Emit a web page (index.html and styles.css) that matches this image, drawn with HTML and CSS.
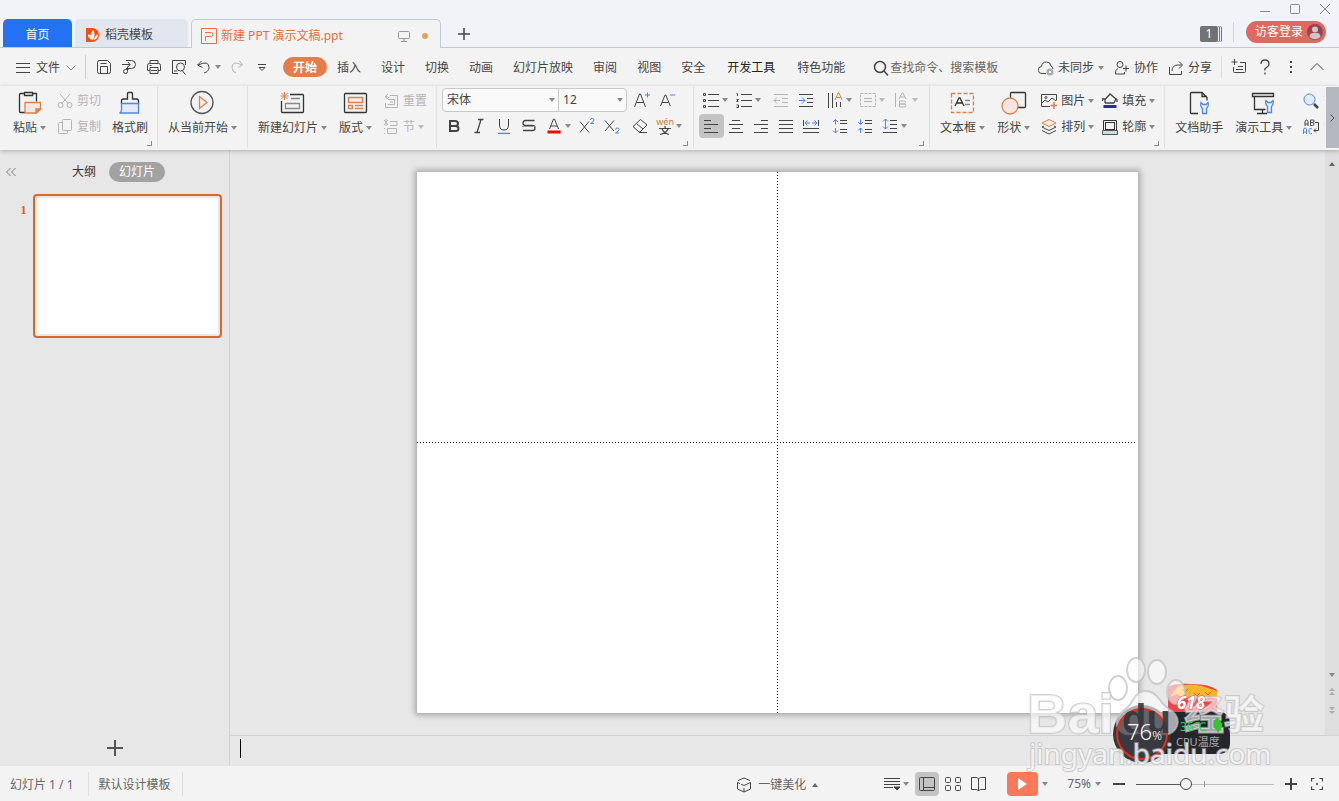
FILE: index.html
```html
<!DOCTYPE html>
<html lang="zh-CN">
<head>
    <meta charset="utf-8">
    <meta name="viewport" content="width=device-width, initial-scale=1">
    <title>新建 PPT 演示文稿.ppt</title>
    <link rel="stylesheet" href="styles.css">
</head>
<body>
    <!-- Window title and document tabs -->
    <header class="titlebar">
        <nav class="doc-tabs">
            <button class="doc-tab home">首页</button>
            <button class="doc-tab store">
                <svg width="14" height="16" viewBox="0 0 14 16"><path d="M0 1h6a7 7 0 0 1 0 14H0z" fill="#ff4a12"/><path d="M7 13C3 11 4 7 7 3c2 3 2 6 0 10zM6 13C3 12 2 10 2 7c2 1 4 3 4 6zM8 13c3-1 4-3 4-6-2 1-4 3-4 6z" fill="#fff"/></svg>
                <span>稻壳模板</span>
            </button>
            <button class="doc-tab active">
                <svg width="16" height="16" viewBox="0 0 16 16" fill="none" stroke="#e8703a"><path d="M.5.5h15v15H.5z"/><path d="M4 4.500h6.500q1.500 0 1.500 2t-1.500 2H4.500V13"/></svg>
                <span class="doc-name">新建 PPT 演示文稿.ppt</span>
                <svg width="12" height="12" viewBox="0 0 12 12" fill="none" stroke="#999"><rect x=".5" y="1.500" width="11" height="7" rx="1"/><path d="M6 8.500v3M3 11.500h6"/></svg>
                <i class="unsaved"></i>
            </button>
            <button class="new-tab" aria-label="新建">
                <svg width="14" height="14" viewBox="0 0 14 14" stroke="#444" stroke-width="1.500"><path d="M7 1v12M1 7h12"/></svg>
            </button>
        </nav>
        <div class="window-side">
            <div class="window-buttons">
                <button aria-label="最小化"><svg width="12" height="12" viewBox="0 0 12 12" stroke="#888"><path d="M1 8.500h10"/></svg></button>
                <button aria-label="最大化"><svg width="12" height="12" viewBox="0 0 12 12" fill="none" stroke="#888"><rect x="1.500" y="1.500" width="9" height="9" rx="1"/></svg></button>
                <button aria-label="关闭"><svg width="12" height="12" viewBox="0 0 12 12" stroke="#888"><path d="M1 1l10 10M11 1L1 11"/></svg></button>
            </div>
            <div class="account">
                <span class="count">1</span>
                <i class="account-line"></i>
                <button class="login">访客登录
                    <svg width="16" height="16" viewBox="0 0 16 16"><circle cx="8" cy="8" r="8" fill="#914850"/><circle cx="8" cy="5.500" r="3" fill="#d7c0c7"/><path d="M2.500 13q0-3.500 3-4h5q3 .5 3 4-5.500 4.500-11 0z" fill="#d7c0c7"/></svg>
                </button>
            </div>
        </div>
    </header>

    <!-- Menu -->
    <nav class="menubar">
        <button class="file-menu">
            <svg width="14" height="12" viewBox="0 0 14 12" stroke="#444"><path d="M0 1.500h14M0 5.500h14M0 10.500h14"/></svg>
            文件
            <svg width="10" height="6" viewBox="0 0 10 6" fill="none" stroke="#888"><path d="M.5.5L5 5 9.500.5"/></svg>
        </button>
        <div class="quick">
            <button class="tool" aria-label="保存"><svg class="ic" viewBox="0 0 16 16"><path d="M2.500 1.500h9l3 3v8q0 2-2 2h-9q-2 0-2-2v-9q0-2 2-2zM4.500 14V7.500h7V14M4.500 4.500h6"/></svg></button>
            <button class="tool" aria-label="输出为PDF"><svg class="ic" viewBox="0 0 16 16"><path d="M5 1.500h5.500a4 4 0 0 1 0 8H5M1 5.500h8M7 3l2 2.500L7 8M6.500 7.500v5a2 2 0 1 1-2-2h3"/></svg></button>
            <button class="tool" aria-label="打印"><svg class="ic" viewBox="0 0 16 16"><path d="M4 4.500v-3h8v3M4 11.500H1.500v-5q0-2 2-2h9q2 0 2 2v5H12M4 8.500h8v6H4zM5 11.500h6M3.500 6.500h2"/></svg></button>
            <button class="tool" aria-label="打印预览"><svg class="ic" viewBox="0 0 16 16"><path d="M7 14.500H1.500v-13h13V6M3 12h3"/><circle cx="9.500" cy="8" r="4"/><path d="M11.500 12l3 3.500"/></svg></button>
            <button class="tool" aria-label="撤销"><svg class="ic" viewBox="0 0 16 16"><path d="M5.500 2l-4 4 5 2.500M2 6q11-5 11 2.500 0 4-5 5.500"/></svg><i class="caret"></i></button>
            <button class="tool faded" aria-label="恢复"><svg class="ic" viewBox="0 0 16 16"><path d="M10.500 2l3 4-4 2.500M13 6Q3 1 3 8.500 3 13 7 14"/></svg></button>
            <button class="tool" aria-label="更多"><svg class="ic" viewBox="0 0 16 16"><path d="M4 5.500h8M5 8.500l3 3 3-3z"/></svg></button>
        </div>
        <div class="menu-tabs">
            <button class="current">开始</button>
            <button>插入</button>
            <button>设计</button>
            <button>切换</button>
            <button>动画</button>
            <button>幻灯片放映</button>
            <button>审阅</button>
            <button>视图</button>
            <button>安全</button>
            <button class="dev">开发工具</button>
            <button>特色功能</button>
        </div>
        <label class="search">
            <svg class="ic" viewBox="0 0 16 16" stroke-width="1.500"><circle cx="7" cy="7" r="5.500"/><path d="M11 11l4 4.500"/></svg>
            <input type="text" aria-label="查找" placeholder="查找命令、搜索模板">
        </label>
        <div class="share">
            <button><svg class="ic" viewBox="0 0 16 16"><path d="M8 13.500H4a3.500 3.500 0 0 1-.5-7Q4 2 8.500 2q4 0 4.500 4 2 1 2 3"/><circle cx="12" cy="12" r="3.500" fill="#a3a9b8" stroke="none"/><path d="M10.800 10.800l2.400 2.400M13.200 10.800l-2.400 2.400" stroke="#fff"/></svg>未同步<i class="caret"></i></button>
            <button><svg class="ic" viewBox="0 0 16 16"><circle cx="6" cy="4.500" r="3"/><path d="M4 8.500q-3 1-2.500 5.500h9v-2M9 8.500h6M12 5.500v6"/></svg>协作</button>
            <button><svg class="ic" viewBox="0 0 16 16"><path d="M1.500 7v7.500h12V11M4 11q0-6 6-6h4M11 1.500L14.500 5 11 8.500"/></svg>分享</button>
        </div>
        <div class="menu-end">
            <button aria-label="批注"><svg class="ic" viewBox="0 0 16 16"><path d="M3.500 0v6M.5 3h6M9 3.500h5.500v9q0 1-1 1H3.500q-1 0-1-1V8M7 7.500h5M5 10.500h7"/></svg></button>
            <button aria-label="帮助"><svg class="ic" viewBox="0 0 16 16"><path d="M4 5q0-4 4-4t4 4q0 2-2.500 3.500T8 11.500M8 13.500v2" stroke-width="1.300"/></svg></button>
            <button aria-label="更多"><svg class="ic" viewBox="0 0 16 16"><path d="M8 2v2M8 7v2M8 12v2" stroke-width="2"/></svg></button>
            <button aria-label="收起"><svg class="ic" viewBox="0 0 16 16"><path d="M1.500 11L8 4.500l6.500 6.500"/></svg></button>
        </div>
    </nav>

    <!-- Ribbon -->
    <section class="ribbon">
        <div class="groups">
            <div class="group first">
                <button class="big">
                    <svg width="28" height="28" viewBox="1 0 28 28" fill="none" stroke="#333" stroke-width="1.300"><path d="M9 4.500H5.500q-1 0-1 1v17q0 1 1 1H10M18 4.500h3.500v8M9.500 3.500h8v3h-8z"/><path d="M10 13.500h15.500v7l-4 3.500H10z" fill="#f5e8e2" stroke="#d9824f"/><path d="M25 20l-4 4v-4z" fill="#d9824f" stroke="#d9824f"/></svg>
                    <span>粘贴<i class="caret"></i></span>
                </button>
                <div class="stack">
                    <button class="small faded"><svg class="ic" viewBox="0 0 16 16"><path d="M3 1l8.500 10M13 1L4.500 11"/><circle cx="3.500" cy="12" r="2.500"/><circle cx="12.500" cy="12" r="2.500"/></svg>剪切</button>
                    <button class="small faded"><svg class="ic" viewBox="0 0 16 16"><rect x="5.500" y=".5" width="9" height="11" rx="1"/><path d="M5.500 3.500h-3q-1 0-1 1v9q0 1 1 1h7q1 0 1-1v-2"/></svg>复制</button>
                </div>
                <button class="big">
                    <svg width="28" height="28" viewBox="0 0 28 28" fill="none" stroke="#333" stroke-width="1.300"><path d="M5.500 15v-3q0-2 2-2h4V4.500q0-1 1-1h3q1 0 1 1V10h4q2 0 2 2v3"/><path d="M5.500 14.500h17v9.500h-19q2-1 2-3z" fill="#e2eaf6" stroke="#4f87dd"/></svg>
                    <span>格式刷</span>
                </button>
                <i class="launcher"></i>
            </div>

            <div class="group">
                <button class="big">
                    <svg width="28" height="28" viewBox="1 0 28 28" fill="none" stroke="#555" stroke-width="1.300"><circle cx="14" cy="13.500" r="11"/><path d="M11.500 7.500v12l7.500-6z" stroke="#d9824f" fill="#f8ece5"/></svg>
                    <span>从当前开始<i class="caret"></i></span>
                </button>
            </div>

            <div class="group">
                <button class="big">
                    <svg width="28" height="28" viewBox="1 0 28 28" fill="none" stroke="#333" stroke-width="1.300"><path d="M12 5.500h12.500q1 0 1 1v16q0 1-1 1h-20q-1 0-1-1V12"/><path d="M7.500 14.500h14v5h-14zM13 9.500h9" stroke="#888"/><path d="M6.500 3v8M2.500 7h8M3.500 4l6 6M9.500 4l-6 6" stroke="#d9824f" stroke-width="1"/></svg>
                    <span>新建幻灯片<i class="caret"></i></span>
                </button>
                <button class="big">
                    <svg width="28" height="28" viewBox="1 0 28 28" fill="none" stroke="#333" stroke-width="1.300"><rect x="3.500" y="4.500" width="22" height="19" rx="1"/><path d="M7.500 8.500h14v5h-14zM7.500 16.500h4v3h-4zM14 16.500h8M14 19.500h8" stroke="#d9824f" fill="#f8ece5"/></svg>
                    <span>版式<i class="caret"></i></span>
                </button>
                <div class="stack">
                    <button class="small faded"><svg class="ic" viewBox="0 0 16 16"><path d="M7 2.500h7.500v12h-12V10M5 6.500h6.500v5H5M5 1L2 3.500 5 6M2 3.500Q5 3 6 5M7 9h3"/></svg>重置</button>
                    <button class="small faded"><svg class="ic" viewBox="0 0 16 16"><path d="M7 2.500h7v4H7M4.500 9.500h9v5h-9zM1 9.500h1M1 14.500h1M1 1l4 5M5 1L1 6M3 0v7"/></svg>节<i class="caret"></i></button>
                </div>
            </div>

            <div class="group column">
                <div class="row">
                    <div class="combo">
                        <label class="pick font"><select aria-label="字体"><option>宋体</option></select><i class="caret"></i></label>
                        <label class="pick size"><select aria-label="字号"><option>12</option></select><i class="caret"></i></label>
                    </div>
                    <div class="set">
                        <button class="tool" aria-label="增大字号"><svg class="ic" viewBox="0 0 16 16"><path d="M.5 15L5.500 2h1l5 13M2.500 10.500h7.500"/><path d="M11 3h5M13.500.5v5" class="blue"/></svg></button>
                        <button class="tool" aria-label="减小字号"><svg class="ic" viewBox="0 0 16 16"><path d="M1.500 14L6 3h.8l4.500 11M3 10.500h6.500"/><path d="M11 3h5" class="blue"/></svg></button>
                    </div>
                </div>
                <div class="row">
                    <div class="set">
                        <button class="tool" aria-label="加粗"><svg class="ic" viewBox="0 0 16 16"><path d="M4 3h5q3 0 3 2.500T9 8H4zM4 8h5.500q3 0 3 2.500t-3 2.500H4z" stroke-width="2"/></svg></button>
                        <button class="tool" aria-label="倾斜"><svg class="ic" viewBox="0 0 16 16"><path d="M7 1.500h5.500M3.500 14.500H9M10 1.500l-4 13" stroke-width="1.300"/></svg></button>
                        <button class="tool" aria-label="下划线"><svg class="ic" viewBox="0 0 16 16"><path d="M3.500 1v6q0 5 4.500 5t4.500-5V1"/><path d="M2 15.500h12" class="blue" stroke-width="1.500"/></svg></button>
                        <button class="tool" aria-label="删除线"><svg class="ic" viewBox="0 0 16 16"><path d="M13.500 2.500h-9q-2.500 0-2.500 2.500t2.500 2.500h7Q14 7.500 14 10t-2.500 2.500H2" stroke-width="1.300"/><path d="M1 8.500h14" stroke="#999"/></svg></button>
                        <button class="tool" aria-label="字体颜色"><svg class="ic" viewBox="0 0 16 16"><path d="M3.500 11L7.500 1h1l4 10M5 8h6"/><path d="M1.500 14h13" stroke="#f00" stroke-width="3"/></svg><i class="caret"></i></button>
                        <button class="tool" aria-label="上标"><svg class="ic" viewBox="0 0 16 16"><path d="M1 3.500l9 11M10 3.500l-9 11"/><path d="M11.500 2q0-1.500 1.700-1.500T15 2t-3.500 3.500H15" class="blue"/></svg></button>
                        <button class="tool" aria-label="下标"><svg class="ic" viewBox="0 0 16 16"><path d="M1 2.500l9 10.500M10 2.500L1 13"/><path d="M11.500 11.500q0-1.500 1.700-1.500t1.800 1.500-3.500 3.500H15" class="blue"/></svg></button>
                    </div>
                    <div class="set">
                        <button class="tool" aria-label="清除格式"><svg class="ic" viewBox="0 0 16 16"><path d="M7 14L1 8.500l7.500-7L15 7l-7 7zM4.500 5.500L11 11M7 14.500h8"/></svg></button>
                        <button class="tool" aria-label="拼音"><span class="pinyin"><b>wén</b><svg width="12" height="9" viewBox="0 0 12 9" fill="none" stroke="#444" stroke-width="1.200"><path d="M6 0v2M0 2.500h12M3 3q2 4 7 5.500M9 3Q7 7 1 8.500"/></svg></span><i class="caret"></i></button>
                    </div>
                </div>
                <i class="launcher"></i>
            </div>

            <div class="group column para">
                <div class="row">
                    <div class="set">
                        <button class="tool" aria-label="项目符号"><svg class="ic" viewBox="0 0 16 16"><path d="M5 2.500h11M5 8.500h11M5 14.500h11"/><path d="M.5 1.500h2v2h-2zM.5 7.500h2v2h-2zM.5 13.500h2v2h-2z"/></svg><i class="caret"></i></button>
                        <button class="tool" aria-label="编号"><svg class="ic" viewBox="0 0 16 16"><path d="M5 2.500h11M5 8.500h11M5 14.500h11M.5 1.500h1v2.500M.5 7.500h2l-2 2h2M.5 13h2v2.500h-2"/></svg><i class="caret"></i></button>
                    </div>
                    <div class="set">
                        <button class="tool faded" aria-label="减少缩进"><svg class="ic" viewBox="0 0 16 16"><path d="M1 2.500h14M9 6.500h6M9 10.500h6M1 14.500h14M1 8.500h6M4 5.500l-3 3 3 3"/></svg></button>
                        <button class="tool" aria-label="增加缩进"><svg class="ic" viewBox="0 0 16 16"><path d="M1 2.500h14M9 6.500h6M9 10.500h6M1 14.500h14"/><path d="M1 8.500h6M4 5.500l3 3-3 3" class="blue"/></svg></button>
                    </div>
                    <div class="set">
                        <button class="tool" aria-label="文字方向"><svg class="ic" viewBox="0 0 16 16"><path d="M1.500 1v15M5.500 1v15M9.500 10v5M13.500 10v5"/><path d="M8 8l3-7h1l3 7M9 5.500h5" stroke="#d9824f"/></svg><i class="caret"></i></button>
                        <button class="tool faded" aria-label="对齐文本"><svg class="ic" viewBox="0 0 16 16"><path d="M.5 1.500h15v13H.5z" stroke-dasharray="3 1"/><path d="M4 6.500h8M4 9.500h8"/></svg><i class="caret"></i></button>
                        <button class="tool faded" aria-label="分散文字"><svg class="ic" viewBox="0 0 16 16"><path d="M2.500 1v14M6 7l3-6h1l3 6M7 5h5M6.500 9v6H11q2 0 2-1.500T11 12H7h3.500q2 0 2-1.500T10.500 9z"/></svg><i class="caret"></i></button>
                    </div>
                </div>
                <div class="row">
                    <div class="set">
                        <button class="tool pressed" aria-label="左对齐"><svg class="ic" viewBox="0 0 16 16"><path d="M1 2.500h7M1 6.500h14M1 10.500h7M1 14.500h14"/></svg></button>
                        <button class="tool" aria-label="居中"><svg class="ic" viewBox="0 0 16 16"><path d="M4 2.500h8M1 6.500h14M4 10.500h8M1 14.500h14"/></svg></button>
                        <button class="tool" aria-label="右对齐"><svg class="ic" viewBox="0 0 16 16"><path d="M8 2.500h7M1 6.500h14M8 10.500h7M1 14.500h14"/></svg></button>
                        <button class="tool" aria-label="两端对齐"><svg class="ic" viewBox="0 0 16 16"><path d="M1 2.500h14M1 6.500h14M1 10.500h14M1 14.500h14"/></svg></button>
                        <button class="tool" aria-label="分散对齐"><svg class="ic" viewBox="0 0 16 16"><path d="M.5 2v6M15.500 2v6M0 10.500h16M0 14.500h16"/><path d="M2 5h5M4.500 2.500L2 5l2.500 2.500M9 5h5M11.500 2.500L14 5l-2.500 2.500" class="blue"/></svg></button>
                    </div>
                    <div class="set">
                        <button class="tool" aria-label="增大段落间距"><svg class="ic" viewBox="0 0 16 16"><path d="M8 2.500h7M8 5.500h7M8 11.500h7M8 14.500h7"/><path d="M3.500 1.500v5M1 4l2.500-2.500L6 4M3.500 10v5M1 12.500L3.500 15 6 12.500" class="blue"/></svg></button>
                        <button class="tool" aria-label="减小段落间距"><svg class="ic" viewBox="0 0 16 16"><path d="M8 2.500h7M8 5.500h7M8 11.500h7M8 14.500h7"/><path d="M3.500 1.500v5M1 4l2.500 2.500L6 4M3.500 10v5M1 12.500L3.500 10 6 12.500" class="blue"/></svg></button>
                        <button class="tool" aria-label="行距"><svg class="ic" viewBox="0 0 16 16"><path d="M8 2.500h7M8 6.500h7M8 10.500h7M1 14.500h14"/><path d="M3.500 1v10M1 3.500L3.500 1 6 3.500M1 8.500L3.500 11 6 8.500" class="blue"/></svg><i class="caret"></i></button>
                    </div>
                </div>
                <i class="launcher"></i>
            </div>

            <div class="group">
                <button class="big">
                    <svg width="28" height="28" viewBox="0 0 28 28" fill="none" stroke="#333" stroke-width="1.300"><rect x="2.500" y="4.500" width="22" height="19" stroke="#d9824f" stroke-dasharray="4 2"/><path d="M6 17l4-8h1l4 8M7.500 14h6"/><path d="M16 11.500h5M16 15.500h5" stroke="#888"/></svg>
                    <span>文本框<i class="caret"></i></span>
                </button>
                <button class="big">
                    <svg width="28" height="28" viewBox="0 0 28 28" fill="none" stroke="#333" stroke-width="1.300"><rect x="10.500" y="3.500" width="15" height="15" rx="1"/><circle cx="10" cy="17" r="8" fill="#f5e5de" stroke="#d9824f"/></svg>
                    <span>形状<i class="caret"></i></span>
                </button>
                <div class="stack">
                    <button class="small"><svg class="ic" viewBox="0 0 16 16"><path d="M9 13.500H.5v-12h15v6M1 10l3-3 3 2 4-4 4 3"/><circle cx="5" cy="4.500" r="1"/><path d="M13 9v7M9.500 12.500h7" stroke="#d9824f" stroke-width="1.500"/></svg>图片<i class="caret"></i></button>
                    <button class="small"><svg class="ic" viewBox="0 0 16 16"><path d="M1 8l7 3.500L15 8M1 11.500L8 15l7-3.500M1 8l2-1M15 8l-2-1"/><path d="M8 .5L15 4 8 7.500 1 4z" stroke="#d9824f" fill="#f8ece5"/></svg>排列<i class="caret"></i></button>
                </div>
                <div class="stack flush">
                    <button class="small"><svg class="ic" viewBox="0 0 16 16"><path d="M3 10V6.500L8 1l6 5-2 4M3 6H.5v2M11 3.500l4 3V9M3 10h9" stroke-width="1.300"/><path d="M1.500 13.500h13" stroke="#2f2a9b" stroke-width="3"/></svg>填充<i class="caret"></i></button>
                    <button class="small"><svg class="ic" viewBox="0 0 16 16"><path d="M1.500 11V1.500h13V11" stroke="#333"/><rect x="3.500" y="3.500" width="9" height="7" stroke="#333"/><path d="M.5 11.500h15v4H.5z" fill="#bfe3e3" stroke="#555"/></svg>轮廓<i class="caret"></i></button>
                </div>
                <i class="launcher"></i>
            </div>

            <div class="group last">
                <button class="big">
                    <svg width="28" height="28" viewBox="0 0 28 28" fill="none" stroke="#333" stroke-width="1.300"><path d="M13 24.500H6.500q-1 0-1-1v-19q0-1 1-1H17l5 5v3M17 3.500v4h5"/><path d="M17.500 24.500v-5q-2.500-2-1.500-6l2 2h3l2-2q1 4-1.500 6v5z" fill="#e2eaf6" stroke="#4f87dd"/></svg>
                    <span>文档助手</span>
                </button>
                <button class="big">
                    <svg width="28" height="28" viewBox="1 0 28 28" fill="none" stroke="#333" stroke-width="1.300"><path d="M3.500 4.500h21v3h-21zM5.500 8v12.500h11M13.500 21v3M8 24.500h10"/><path d="M18.500 23.500v-6q-2.500-2-1.500-6l2 2h3l2-2q1 4-1.500 6v6z" fill="#e2eaf6" stroke="#4f87dd"/></svg>
                    <span>演示工具<i class="caret"></i></span>
                </button>
                <div class="stack">
                    <button class="small"><svg class="ic" viewBox="0 0 16 16"><circle cx="6.500" cy="6.500" r="5.500" fill="#e2eaf6" class="blue"/><path d="M11 11l4 4" stroke-width="2.500"/></svg>查找</button>
                    <button class="small"><svg class="ic" viewBox="0 0 16 16"><path d="M2 7V3q0-2 1.500-2T5 3v4M2 5h3M7.500 1v5.500h2q1.500 0 1.500-1.500T9.500 3.500H8h1.500Q11 3.500 11 2T9.500 1zM12 3.500h3.500v8H11M13 9.500l-2 2 2 2"/><path d="M.5 15v-4q0-2 1.500-2t1.500 2v4M.5 13h3M9 10q-3-2-3 2t3 2.500" class="blue"/></svg>替换</button>
                </div>
            </div>
        </div>
        <button class="ribbon-next" aria-label="更多命令"><svg width="5" height="8" viewBox="0 0 5 8" fill="none" stroke="#555"><path d="M.5.5L4 4 .5 7.500"/></svg></button>
    </section>

    <main>
        <aside class="sidebar">
            <div class="side-head">
                <button class="collapse" aria-label="收起"><svg width="10" height="10" viewBox="0 0 10 10" fill="none" stroke="#777"><path d="M4.500 1l-4 4 4 4M9.500 1l-4 4 4 4"/></svg></button>
                <button class="side-tab">大纲</button>
                <button class="side-tab on">幻灯片</button>
            </div>
            <div class="thumb-row">
                <span class="thumb-no">1</span>
                <div class="thumb"></div>
            </div>
            <button class="add-slide" aria-label="新建幻灯片"><svg width="16" height="16" viewBox="0 0 16 16" stroke="#555" stroke-width="2"><path d="M8 0v16M0 8h16"/></svg></button>
        </aside>

        <section class="work">
            <div class="stage">
                <div class="canvas">
                    <div class="slide">
                        <i class="guide-v"></i>
                        <i class="guide-h"></i>
                    </div>
                </div>
                <div class="scrollbar">
                    <i class="caret up"></i>
                    <i class="caret bottom"></i>
                    <svg width="8" height="28" viewBox="0 0 8 28" fill="#aaa"><path d="M1 4l3-3 3 3zM1 8l3-3 3 3zM1 20l3 3 3-3zM1 24l3 3 3-3z"/></svg>
                </div>
            </div>
            <div class="notes"><i class="cursor"></i><textarea aria-label="备注" rows="1"></textarea></div>
        </section>
    </main>

    <footer class="statusbar">
        <span class="status-item page">幻灯片 1 / 1</span>
        <span class="status-item">默认设计模板</span>
        <button class="beautify"><svg class="ic" viewBox="0 0 16 16"><path d="M2 3.500L8 1l6 2.500M1.500 5.500v6.500L8 15l6.500-3V5.500L8 8.500l-3-1.300M1.500 5.500L4 6.700M8 11v4"/></svg>一键美化<i class="caret up"></i></button>
        <div class="views">
            <button class="notes-btn" aria-label="备注"><svg class="ic" viewBox="0 0 16 16"><path d="M0 2.500h16M0 5.500h16M0 8.500h16M0 11.500h9"/><path d="M10 11h6l-3 3z" fill="#444"/></svg><i class="caret"></i></button>
            <button class="view on" aria-label="普通视图"><svg class="ic" viewBox="0 0 16 16"><rect x=".5" y="1.500" width="15" height="13" rx="1"/><path d="M4.500 2v12M4.500 11.500H15"/></svg></button>
            <button class="view" aria-label="浏览视图"><svg class="ic" viewBox="0 0 16 16"><rect x=".5" y="1.500" width="5" height="5" rx="1"/><rect x="10.500" y="1.500" width="5" height="5" rx="1"/><rect x=".5" y="9.500" width="5" height="5" rx="1"/><rect x="10.500" y="9.500" width="5" height="5" rx="1"/></svg></button>
            <button class="view" aria-label="阅读视图"><svg class="ic" viewBox="0 0 16 16"><path d="M7.500 3q-1-1.500-2-1.500h-5v12h5q1 0 2 1.500 1-1.500 2-1.500h5v-12h-5q-1 0-2 1.500zM7.500 3v12"/></svg></button>
        </div>
        <button class="play" aria-label="放映"><svg width="9" height="12" viewBox="0 0 9 12" fill="#fff"><path d="M0 0l9 6-9 6z"/></svg></button>
        <i class="caret"></i>
        <button class="zoom">75%<i class="caret"></i></button>
        <button class="step" aria-label="缩小"><svg width="12" height="12" viewBox="0 0 12 12" stroke="#444" stroke-width="2"><path d="M0 6h12"/></svg></button>
        <input class="zoom-slider" type="range" aria-label="缩放" min="0" max="100" value="35">
        <button class="step plus" aria-label="放大"><svg width="12" height="12" viewBox="0 0 12 12" stroke="#444" stroke-width="2"><path d="M6 0v12M0 6h12"/></svg></button>
        <button class="fit" aria-label="适应窗口"><svg width="12" height="12" viewBox="0 0 12 12" fill="none" stroke="#444" stroke-width="1.200"><path d="M.5 3.500v-3h3M8.500.5h3v3M11.500 8.500v3h-3M3.500 11.500h-3v-3"/><circle cx="6" cy="6" r="1" fill="#444" stroke="none"/></svg></button>
    </footer>

    <!-- Desktop temperature widget with the site watermark -->
    <div class="float-widget">
        <svg width="260" height="130" viewBox="0 0 260 130">
            <path d="M148 62V37q6-4 24-3 18 0 25 6v22z" fill="#e6484b"/>
            <path d="M150 47l8-11q14-3 24 0l15 5v8l-8-3-7 6-9-7-8 4-8-5z" fill="#f7b52c"/>
            <path d="M162 39l3 3 3-3M174 43l3 3 3-3M185 42l3 3 3-3" fill="none" stroke="#e66a24"/>
            <rect x="130" y="62" width="80" height="42" rx="10" fill="#24262b"/>
            <circle cx="122" cy="84" r="29" fill="#36373d"/>
            <g class="paw">
                <ellipse cx="98" cy="38" rx="9" ry="12"/>
                <ellipse cx="116" cy="20" rx="9" ry="12"/>
                <ellipse cx="137" cy="22" rx="9" ry="12"/>
                <ellipse cx="156" cy="42" rx="9" ry="12"/>
                <path d="M125 41q9 0 15 9 5 7 12 11 8 7 5 15-4 10-16 8-14-3-28 0-12 2-16-8-2-8 6-15 6-4 10-11 5-9 12-9z"/>
            </g>
            <circle cx="122" cy="84" r="25" fill="#3a3b43" fill-opacity=".65" stroke="#dd321a" stroke-width="2"/>
            <text x="7" y="83" class="mark">Bai</text>
            <text x="102" y="83" class="mark dark">du</text>
            <text x="164" y="79" class="mark cn">经验</text>
            <text x="9" y="114" class="site">jingyan.baidu.com</text>
            <path d="M197 67q8 7 4 12l-2 2-1 3-1-3q-7-6 0-14z" fill="#35c52e"/>
            <text x="160" y="81" class="temp">36℃</text>
            <text x="156" y="96" class="cpu">CPU温度</text>
            <text x="157" y="59" class="sale">618</text>
            <text x="107" y="90" class="percent">76<tspan class="unit">%</tspan></text>
        </svg>
    </div>
</body>
</html>
```
FILE: styles.css
```css
* {
    box-sizing: border-box;
}
body {
    margin: 0;
    min-height: 100vh;
    display: flex;
    flex-direction: column;
    font-family: "Noto Sans", "Noto Sans CJK SC", sans-serif;
    font-size: 12px;
    line-height: 20px;
    color: #444;
    background: #e7e7e7;
    overflow: hidden;
}
button, input, select, textarea {
    font: inherit;
    color: inherit;
    background: none;
    border: 0;
    margin: 0;
    padding: 0;
    outline: none;
}
button {
    display: flex;
    align-items: center;
    white-space: nowrap;
    flex: none;
}
svg {
    display: block;
    flex: none;
}
.ic {
    width: 16px;
    height: 16px;
    fill: none;
    stroke: #444;
}
.blue {
    stroke: #4f87dd;
}
.caret {
    flex: none;
    border: 3px solid transparent;
    border-top: 4px solid #888;
    border-bottom: 0;
}
.caret.up {
    border-top: 0;
    border-bottom: 4px solid #666;
}
.faded {
    color: #b5b5b5;
}
.faded .ic {
    stroke: #b5b5b5;
}
.faded .caret {
    border-top-color: #bbb;
}

/* title bar */
.titlebar {
    height: 48px;
    flex: none;
    display: flex;
    justify-content: space-between;
    background: #f2f3f8;
    border-bottom: 1px solid #c3c7da;
}
.doc-tabs {
    display: flex;
    align-items: flex-end;
    gap: 3px;
    padding-left: 3px;
}
.doc-tab {
    height: 28px;
    border-radius: 5px 5px 0 0;
    padding-top: 3px;
}
.doc-tab.home {
    width: 69px;
    justify-content: center;
    background: #2173f3;
    color: #fff;
}
.doc-tab.store {
    width: 113px;
    padding-left: 11px;
    gap: 5px;
    background: #e2e6ef;
}
.doc-tab.active {
    width: 250px;
    height: 29px;
    margin-bottom: -1px;
    padding-left: 9px;
    padding-right: 12px;
    gap: 4px;
    color: #e8703a;
    background: #f3f3f3;
    border: 1px solid #c3c7da;
    border-bottom: 0;
}
.doc-name {
    flex: 1;
    text-align: left;
}
.unsaved {
    width: 6px;
    height: 6px;
    margin-left: 8px;
    border-radius: 50%;
    background: #e5a05a;
}
.new-tab {
    height: 28px;
    padding: 2px 13px 0;
}
.window-side {
    display: flex;
    flex-direction: column;
    align-items: flex-end;
    padding-right: 8px;
}
.window-buttons {
    display: flex;
    gap: 18px;
    padding-top: 3px;
    height: 21px;
    align-items: flex-start;
}
.account {
    display: flex;
    align-items: center;
    padding-right: 5px;
}
.count {
    width: 18px;
    height: 16px;
    line-height: 16px;
    margin-top: 4px;
    border-radius: 2px;
    text-align: center;
    color: #fff;
    background: #727272;
    box-shadow: 1px 0 #f2f3f8, 2px 0 #727272, 3px 0 #f2f3f8, 4px 0 #727272;
}
.account-line {
    height: 20px;
    margin: 0 12px 0 15px;
    border-left: 1px solid #d5d6dc;
}
.login {
    height: 22px;
    padding: 0 3px 0 9px;
    gap: 4px;
    border-radius: 11px;
    color: #fff;
    background: #d96b60;
}

/* menu bar */
.menubar {
    height: 38px;
    flex: none;
    display: flex;
    align-items: center;
    background: #f3f3f3;
}
.file-menu {
    height: 24px;
    padding: 2px 9px 0 16px;
    gap: 6px;
    border-right: 1px solid #ccc;
}
.quick {
    display: flex;
    padding-left: 6px;
}
.tool {
    height: 24px;
    min-width: 25px;
    padding: 0 4px;
    border-radius: 4px;
    gap: 3px;
}
.menu-tabs {
    display: flex;
    padding-left: 8px;
}
.menu-tabs button {
    height: 20px;
    padding: 2px 10px 0;
    border-radius: 10px;
}
.menu-tabs .current {
    color: #fff;
    font-weight: bold;
    background: #e77c4b;
}
.menu-tabs .dev {
    padding: 2px 12px 0;
    color: #222;
}
.search {
    display: flex;
    align-items: center;
    flex: 1;
    padding: 2px 0 0 18px;
    gap: 1px;
}
.search input {
    width: 120px;
}
.search input::placeholder {
    color: #666;
    opacity: 1;
}
.share {
    display: flex;
    gap: 10px;
    padding: 2px 9px 0 0;
    border-right: 1px solid #ddd;
}
.share button {
    gap: 4px;
}
.menu-end {
    display: flex;
    gap: 10px;
    padding: 0 14px 0 9px;
}

/* ribbon */
.ribbon {
    height: 64px;
    flex: none;
    display: flex;
    background: #f3f3f3;
    box-shadow: 0 1px 4px rgba(0, 0, 0, 0.25);
    position: relative;
    z-index: 1;
}
.groups {
    flex: 1;
    min-width: 0;
    display: flex;
    overflow: hidden;
    margin-right: 2px;
}
.group {
    display: flex;
    flex: none;
    gap: 2px;
    height: 62px;
    padding: 1px 5px 0;
    border-right: 1px solid #e0e0e0;
    position: relative;
}
.group.first {
    padding-left: 8px;
    padding-right: 4px;
}
.group.last {
    border-right: 0;
}
.group.column {
    flex-direction: column;
    gap: 0;
    width: 257px;
    padding-left: 5px;
}
.group.para {
    width: 236px;
}
.big {
    flex-direction: column;
    height: 52px;
    padding: 2px 5px;
}
.big span {
    display: flex;
    align-items: center;
    gap: 3px;
    padding-top: 1px;
}
.stack {
    display: flex;
    flex-direction: column;
}
.stack.flush {
    margin-left: -2px;
}
.small {
    height: 26px;
    padding: 1px 4px 0;
    gap: 4px;
}
.small .caret {
    margin-left: -1px;
}
.row {
    display: flex;
    align-items: center;
    gap: 3px;
    height: 26px;
}
.para .row {
    gap: 4px;
}
.set {
    display: flex;
}
.row .tool.pressed {
    background: #c3c3c3;
}
.launcher {
    position: absolute;
    right: 5px;
    bottom: 2px;
    width: 5px;
    height: 5px;
    border-right: 1px solid #888;
    border-bottom: 1px solid #888;
}
.combo {
    display: flex;
    width: 185px;
    height: 24px;
    border: 1px solid #c8c8c8;
    border-radius: 4px;
    background: #fafafa;
}
.pick {
    display: flex;
    align-items: center;
    padding-right: 3px;
}
.pick.font {
    width: 116px;
    border-right: 1px solid #c8c8c8;
}
.pick.size {
    flex: 1;
}
.pick select {
    flex: 1;
    min-width: 0;
    padding-left: 4px;
    appearance: none;
}
.pinyin {
    display: flex;
    flex-direction: column;
    align-items: center;
    width: 16px;
}
.pinyin b {
    font-weight: normal;
    font-size: 9px;
    line-height: 8px;
    color: #c77a4a;
}
.ribbon-next {
    width: 13px;
    height: 61px;
    margin-top: 1px;
    justify-content: center;
    background: #b5b8c1;
}

/* slide list */
main {
    flex: 1;
    display: flex;
    min-height: 0;
}
.sidebar {
    width: 230px;
    flex: none;
    display: flex;
    flex-direction: column;
    border-right: 1px solid #d3d3d3;
}
.side-head {
    display: flex;
    align-items: center;
    height: 44px;
    padding-left: 6px;
}
.collapse {
    margin-right: 46px;
}
.side-tab {
    padding: 0 10px;
    color: #333;
}
.side-tab.on {
    margin-left: 3px;
    border-radius: 10px;
    color: #fff;
    background: #a2a2a2;
}
.thumb-row {
    display: flex;
    padding: 0 7px 0 20px;
    gap: 6px;
}
.thumb-no {
    width: 7px;
    padding-top: 6px;
    font-family: "Liberation Serif", serif;
    font-weight: bold;
    text-align: center;
    color: #d8631e;
}
.thumb {
    flex: 1;
    height: 144px;
    padding: 2px;
    border: 2px solid #d8692c;
    border-radius: 4px;
    background: #fff;
    background-clip: content-box;
}
.add-slide {
    margin: auto auto 10px;
}

/* editing area */
.work {
    flex: 1;
    display: flex;
    flex-direction: column;
    min-width: 0;
}
.stage {
    flex: 1;
    display: flex;
    min-height: 0;
}
.canvas {
    flex: 1;
    display: flex;
    justify-content: center;
    padding: 22px 0;
}
.slide {
    height: 100%;
    aspect-ratio: 4 / 3;
    position: relative;
    background: #fff;
    box-shadow: 0 0 6px 2px rgba(0, 0, 0, 0.3);
}
.guide-v {
    position: absolute;
    top: 0;
    bottom: 0;
    left: 50%;
    width: 1px;
    background: repeating-linear-gradient(#000 0 1px, #fff 1px 3px);
}
.guide-h {
    position: absolute;
    left: 0;
    right: 3px;
    bottom: 50%;
    height: 1px;
    background: repeating-linear-gradient(90deg, #000 0 1px, #fff 1px 3px);
}
.scrollbar {
    width: 14px;
    display: flex;
    flex-direction: column;
    align-items: center;
    padding: 12px 0 20px;
    background: #dedede;
}
.scrollbar .bottom {
    margin: auto 0 10px;
}
.notes {
    display: flex;
    height: 31px;
    padding: 3px 10px;
    border-top: 1px solid #d3d3d3;
}
.cursor {
    height: 19px;
    border-left: 1px solid #000;
}
.notes textarea {
    flex: 1;
    resize: none;
}

/* status bar */
.statusbar {
    height: 35px;
    flex: none;
    display: flex;
    align-items: center;
    background: #f3f3f3;
    color: #666;
}
.status-item {
    height: 24px;
    line-height: 26px;
    padding: 0 11px 0 10px;
    border-right: 1px solid #e0e0e0;
}
.status-item.page {
    padding-right: 14px;
}
.beautify {
    margin-left: auto;
    gap: 6px;
    padding-top: 2px;
}
.views {
    display: flex;
    align-items: center;
    gap: 2px;
    margin-left: 66px;
}
.notes-btn {
    gap: 3px;
    margin-right: 4px;
}
.view {
    width: 24px;
    height: 24px;
    justify-content: center;
    border-radius: 4px;
}
.view.on {
    background: #c3c3c3;
}
.play {
    width: 31px;
    height: 24px;
    margin: 0 4px 0 16px;
    justify-content: center;
    border-radius: 4px;
    background: #fc7858;
}
.zoom {
    gap: 4px;
    margin: 0 1px 0 19px;
}
.step {
    margin: 0 11px;
}
.step.plus {
    margin-right: 14px;
}
.zoom-slider {
    width: 138px;
    height: 16px;
    appearance: none;
    background: linear-gradient(#999, #999) 68px 5px / 1px 6px no-repeat,
        linear-gradient(90deg, #555 36%, #bbb 36%) 0 8px / 100% 1px no-repeat;
}
.zoom-slider::-webkit-slider-thumb {
    appearance: none;
    width: 12px;
    height: 12px;
    border: 1px solid #444;
    border-radius: 50%;
    background: #f3f3f3;
}
.fit {
    margin-right: 16px;
}

/* floating widget */
.float-widget {
    position: absolute;
    right: 59px;
    bottom: 21px;
    z-index: 2;
    pointer-events: none;
}
.paw {
    fill: rgba(255, 255, 255, 0.6);
    stroke: rgba(190, 190, 190, 0.7);
    stroke-width: 2px;
}
.mark {
    font-family: "Liberation Sans", sans-serif;
    font-size: 56px;
    font-weight: bold;
    fill: rgba(255, 255, 255, 0.6);
    stroke: rgba(190, 190, 190, 0.7);
    stroke-width: 2px;
    paint-order: stroke;
}
.mark.dark {
    font-size: 40px;
    fill: rgba(50, 52, 58, 0.9);
    stroke: none;
}
.mark.cn {
    font-family: "Noto Sans CJK SC", sans-serif;
    font-size: 40px;
}
.site {
    font-family: "Noto Sans", sans-serif;
    font-size: 28px;
    fill: rgba(255, 255, 255, 0.75);
    stroke: rgba(180, 180, 180, 0.6);
    stroke-width: 2px;
    paint-order: stroke;
}
.sale {
    font-size: 17px;
    font-style: italic;
    font-weight: bold;
    fill: #fff;
    stroke: #e6484b;
    paint-order: stroke;
}
.temp {
    font-size: 12px;
    fill: #35d04a;
}
.cpu {
    font-size: 11px;
    fill: #aaa;
}
.percent {
    font-size: 22px;
    font-weight: 300;
    fill: #fff;
}
.unit {
    font-size: 12px;
}
```
